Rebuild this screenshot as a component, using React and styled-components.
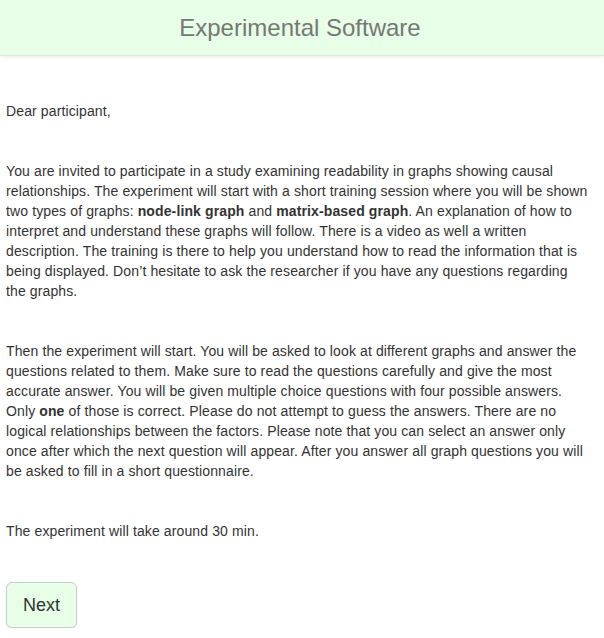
import React from 'react'
import styled, {createGlobalStyle} from 'styled-components'

const GlobalStyle = createGlobalStyle`
    html, body {
        margin: 0;
        padding: 0;
        background: #fff;
    }
    body {
        font-family: "Liberation Sans", Arial, Helvetica, sans-serif;
        font-size: 14px;
        line-height: 20px;
        letter-spacing: 0.12px;
        color: #333;
    }
`

const Header = styled.div`
    height: 55px;
    background: #e6ffe6;
    border-bottom: 1px solid #e0e6e0;
    box-shadow: 0 1px 4px rgba(0, 0, 0, 0.08);
    display: flex;
    align-items: center;
    justify-content: center;
`

const Title = styled.div`
    font-size: 24px;
    line-height: 28px;
    letter-spacing: 0;
    color: #777;
    margin-left: -4px;
`

const Content = styled.div`
    padding: 45px 14px 0 6px;
`

const Paragraph = styled.p`
    margin: 0 0 40px 0;
`

const Strong = styled.b`
    font-weight: bold;
`

const NextButton = styled.button`
    margin-top: 1px;
    font-family: "Liberation Sans", Arial, Helvetica, sans-serif;
    font-size: 18px;
    line-height: 24px;
    color: #333;
    padding: 10px 16px;
    background: #e6ffe6;
    border: 1px solid #ccc;
    border-radius: 6px;
    box-shadow: 0 1px 2px rgba(0, 0, 0, 0.1);
    cursor: pointer;
`

function App() {
    return (
        <>
            <GlobalStyle/>
            <Header>
                <Title>Experimental Software</Title>
            </Header>
            <Content>
                <Paragraph>Dear participant,</Paragraph>
                <Paragraph>
                    You are invited to participate in a study examining readability in graphs showing causal
                    relationships. The experiment will start with a short training session where you will be shown
                    two types of graphs: <Strong>node-link graph</Strong> and <Strong>matrix-based graph</Strong>. An explanation of how to
                    interpret and understand these graphs will follow. There is a video as well a written
                    description. The training is there to help you understand how to read the information that is
                    being displayed. Don’t hesitate to ask the researcher if you have any questions regarding
                    the graphs.
                </Paragraph>
                <Paragraph>
                    Then the experiment will start. You will be asked to look at different graphs and answer the
                    questions related to them. Make sure to read the questions carefully and give the most
                    accurate answer. You will be given multiple choice questions with four possible answers.
                    Only <Strong>one</Strong> of those is correct. Please do not attempt to guess the answers. There are no
                    logical relationships between the factors. Please note that you can select an answer only
                    once after which the next question will appear. After you answer all graph questions you will
                    be asked to fill in a short questionnaire.
                </Paragraph>
                <Paragraph>The experiment will take around 30 min.</Paragraph>
                <NextButton>Next</NextButton>
            </Content>
        </>
    )
}

export default App
